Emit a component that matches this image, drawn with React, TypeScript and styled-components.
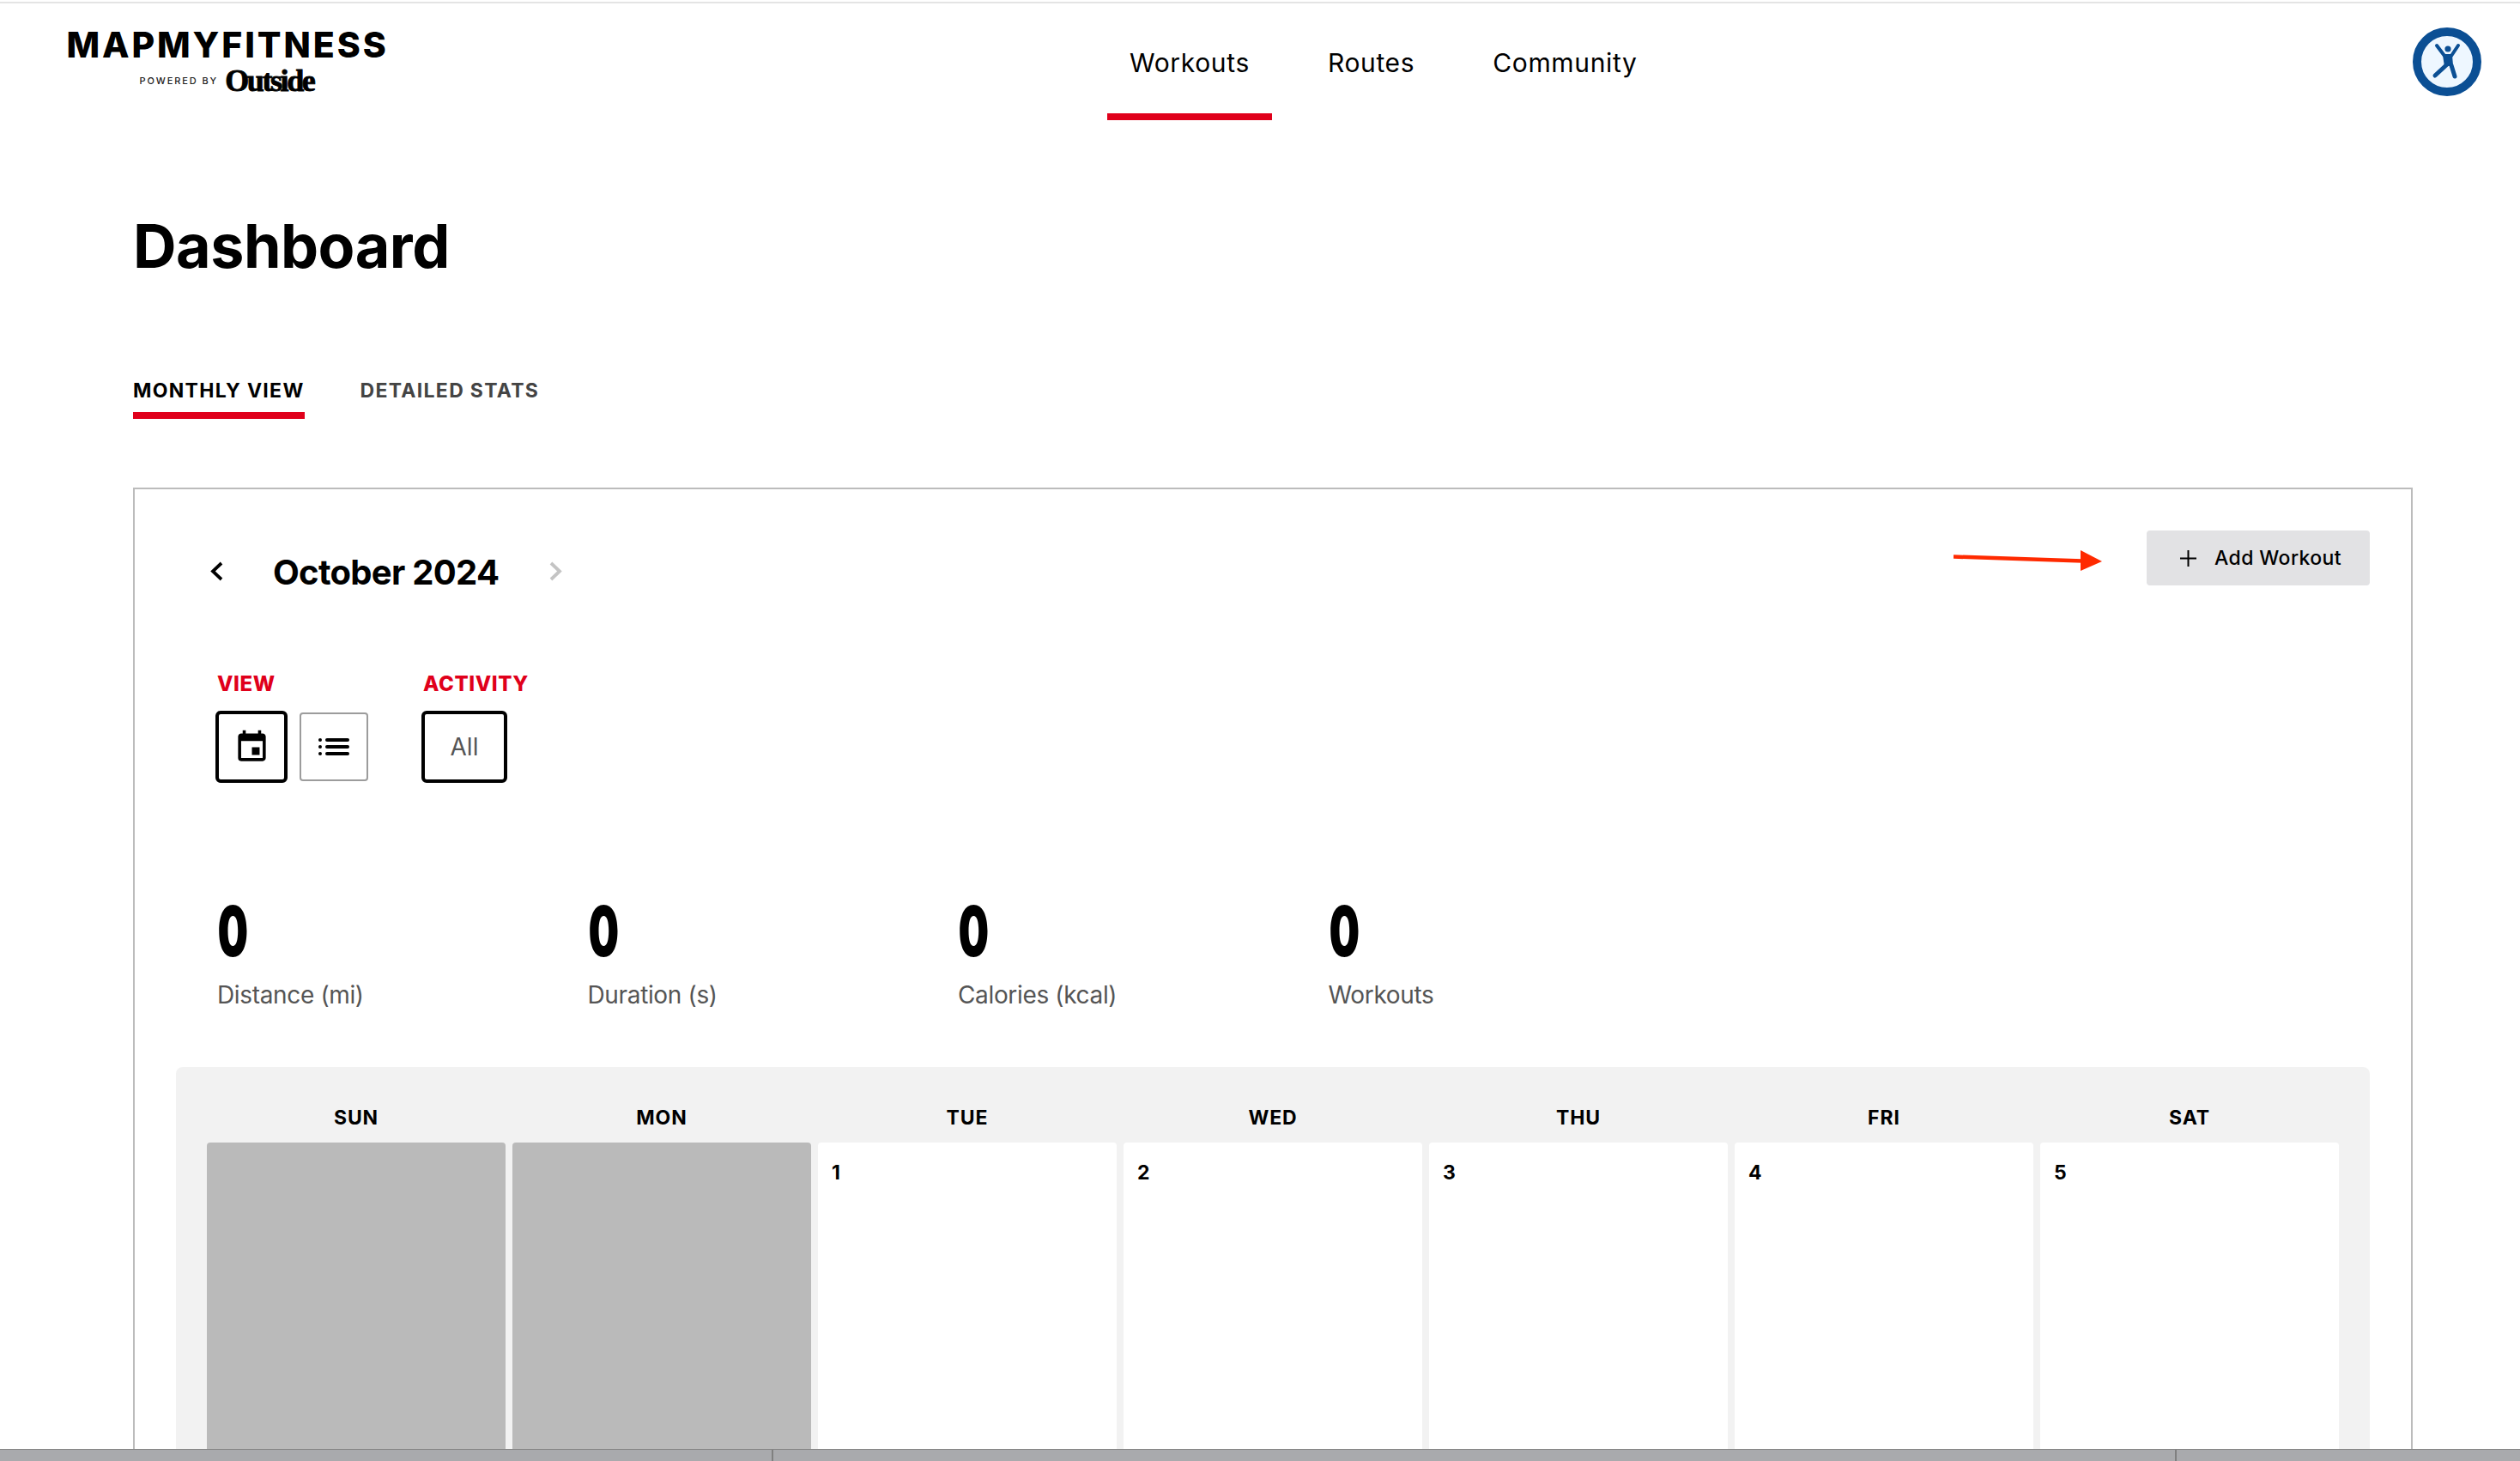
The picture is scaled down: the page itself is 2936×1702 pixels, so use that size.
import styled, { createGlobalStyle } from "styled-components";
import { MdEvent } from "react-icons/md";

const GlobalStyle = createGlobalStyle`
  html, body {
    margin: 0;
    padding: 0;
    background: #fff;
    font-family: Inter, "Liberation Sans", sans-serif;
    color: #000;
  }
`;

const Page = styled.div`
  display: flex;
  flex-direction: column;
  height: 1702px;
  overflow: hidden;
  padding-top: 2px;
  box-sizing: border-box;
`;

const Header = styled.header`
  display: flex;
  align-items: flex-start;
  flex: none;
  height: 138px;
  box-sizing: border-box;
  border-top: 2px solid #e4e4e4;
  padding-left: 80px;
  padding-right: 45px;
`;

const Logo = styled.div`
  display: flex;
  flex-direction: column;
  align-items: center;
  width: 368px;
  padding-top: 28px;
`;

const LogoWord = styled.div`
  margin-left: 2px;
  font-size: 41px;
  line-height: 41px;
  font-weight: 800;
  letter-spacing: 2.9px;
  white-space: nowrap;
`;

const PoweredRow = styled.div`
  display: flex;
  align-items: center;
  gap: 8px;
  margin-top: 5px;
`;

const PoweredBy = styled.span`
  font-size: 11px;
  line-height: 14px;
  letter-spacing: 1.9px;
  font-weight: 500;
  color: #222;
`;

const Outside = styled.span`
  font-family: "Liberation Serif", serif;
  font-weight: 700;
  font-size: 36px;
  line-height: 32px;
  letter-spacing: -2.4px;
  -webkit-text-stroke: 0.9px #000;
`;

const Nav = styled.nav`
  display: flex;
  gap: 39px;
  margin-left: 842px;
`;

const NavItem = styled.a<{ $active?: boolean }>`
  display: block;
  box-sizing: border-box;
  height: 136px;
  padding: 54px 26px 0;
  font-size: 30px;
  line-height: 30px;
  letter-spacing: 0.65px;
  border-bottom: 8px solid ${(p) => (p.$active ? "#e0001b" : "transparent")};
`;

const Avatar = styled.div`
  margin-left: auto;
  margin-top: 28px;
  width: 80px;
  height: 80px;
`;

const Main = styled.main`
  flex: 1;
  min-height: 0;
  overflow: hidden;
  padding: 0 125px 0 155px;
`;

const Title = styled.h1`
  margin: 112px 0 0;
  font-size: 70px;
  line-height: 70px;
  font-weight: 700;
  letter-spacing: -0.5px;
`;

const Tabs = styled.div`
  display: flex;
  gap: 65px;
  margin-top: 121px;
`;

const Tab = styled.div<{ $active?: boolean }>`
  box-sizing: border-box;
  height: 45px;
  padding-top: 1px;
  font-size: 23px;
  line-height: 23px;
  font-weight: 700;
  letter-spacing: 1.3px;
  color: ${(p) => (p.$active ? "#000" : "#444")};
  border-bottom: 8px solid ${(p) => (p.$active ? "#e0001b" : "transparent")};
`;

const Card = styled.section`
  margin-top: 80px;
  border: 2px solid #bcbcbc;
  padding: 48px 48px 0;
  height: 1300px;
`;

const CardTop = styled.div`
  display: flex;
  justify-content: space-between;
  align-items: flex-start;
`;

const MonthNav = styled.div`
  display: flex;
  align-items: center;
  height: 40px;
  margin: 29px 0 0 40px;
`;

const MonthLabel = styled.div`
  margin: 0 59px 0 58px;
  font-size: 40px;
  line-height: 40px;
  font-weight: 700;
  letter-spacing: -0.7px;
  white-space: nowrap;
`;

const Chevron = styled.svg`
  display: block;
  margin-top: -3px;
`;

const Actions = styled.div`
  display: flex;
  align-items: flex-start;
  gap: 52px;
`;

const Arrow = styled.svg`
  display: block;
  margin-top: 23px;
`;

const AddButton = styled.button`
  display: flex;
  align-items: center;
  gap: 21px;
  box-sizing: border-box;
  width: 260px;
  height: 64px;
  padding: 0 0 0 39px;
  border: 0;
  border-radius: 4px;
  background: #e2e2e4;
  color: #000;
  font-family: inherit;
  font-size: 23px;
  font-weight: 500;
  letter-spacing: 0.4px;
  white-space: nowrap;
`;

const Filters = styled.div`
  display: flex;
  gap: 62px;
  margin: 98px 0 0 46px;
`;

const FilterLabel = styled.div`
  margin: 0 0 19px 2px;
  font-size: 24px;
  line-height: 24px;
  font-weight: 800;
  letter-spacing: 0.6px;
  color: #e0001b;
`;

const FilterRow = styled.div`
  display: flex;
  align-items: center;
  gap: 14px;
`;

const FilterButton = styled.div<{ $selected?: boolean; $wide?: boolean }>`
  display: flex;
  align-items: center;
  justify-content: center;
  box-sizing: border-box;
  width: ${(p) => (p.$wide ? "100px" : p.$selected ? "84px" : "80px")};
  height: ${(p) => (p.$selected ? "84px" : "80px")};
  border: ${(p) => (p.$selected ? "4px solid #000" : "2px solid #9c9c9c")};
  border-radius: ${(p) => (p.$selected ? "6px" : "4px")};
  font-size: 28px;
  color: #555;
`;

const Stats = styled.div`
  display: grid;
  grid-template-columns: repeat(4, 431.5px);
  margin: 133px 0 0 48px;
`;

const StatValue = styled.div`
  padding-left: 1px;
  font-size: 81px;
  line-height: 81px;
  font-weight: 900;
  transform: scaleX(0.62);
  transform-origin: left center;
`;

const StatLabel = styled.div`
  margin-top: 19px;
  font-size: 28px;
  line-height: 28px;
  letter-spacing: -0.35px;
  color: #555;
`;

const Panel = styled.div`
  margin-top: 70px;
  padding: 48px 36px 0;
  border-radius: 8px 8px 0 0;
  background: #f2f2f2;
  height: 700px;
`;

const CalendarGrid = styled.div`
  display: grid;
  grid-template-columns: repeat(7, 348px);
  column-gap: 8px;
`;

const Weekday = styled.div`
  margin-bottom: 17px;
  text-align: center;
  font-size: 23px;
  line-height: 23px;
  font-weight: 700;
  letter-spacing: 0.9px;
`;

const Day = styled.div<{ $blank?: boolean }>`
  box-sizing: border-box;
  height: 420px;
  padding: 24px 16px;
  border-radius: 4px;
  background: ${(p) => (p.$blank ? "#bababa" : "#fff")};
  font-size: 23px;
  line-height: 23px;
  font-weight: 700;
`;

const DockBar = styled.div`
  display: flex;
  flex: none;
  height: 14px;
  box-sizing: border-box;
  border-top: 1px solid #868686;
  background: #a9aaad;
`;

const DockSegment = styled.div<{ $width?: number }>`
  flex: ${(p) => (p.$width ? `0 0 ${p.$width}px` : "1")};
  border-right: ${(p) => (p.$width ? "2px solid #808080" : "0")};
  box-sizing: border-box;
`;

const ChevronLeft = () => (
  <Chevron width="15" height="23" viewBox="0 0 15 23" fill="none" stroke="#000" strokeWidth="3.8">
    <path d="M13 2 3 11.5 13 21" />
  </Chevron>
);

const ChevronRight = () => (
  <Chevron width="15" height="23" viewBox="0 0 15 23" fill="none" stroke="#c4c4c4" strokeWidth="3.8">
    <path d="M2 2l10 9.5L2 21" />
  </Chevron>
);

const ListIcon = () => (
  <svg width="36" height="20" viewBox="0 0 36 20" fill="#000">
    <circle cx="2" cy="2" r="2" />
    <circle cx="2" cy="10" r="2" />
    <circle cx="2" cy="18" r="2" />
    <rect x="8" y="0" width="28" height="4" rx="2" />
    <rect x="8" y="8" width="28" height="4" rx="2" />
    <rect x="8" y="16" width="28" height="4" rx="2" />
  </svg>
);

const PlusIcon = () => (
  <svg width="19" height="19" viewBox="0 0 19 19" stroke="#000" strokeWidth="2">
    <path d="M9.5 0v19M0 9.5h19" />
  </svg>
);

const AvatarIcon = () => (
  <svg width="80" height="80" viewBox="0 0 80 80">
    <circle cx="40" cy="40" r="35" fill="#eef7ff" stroke="#0b4f94" strokeWidth="10" />
    <circle cx="41" cy="25" r="3.6" fill="#0b4f94" />
    <path d="M28 21 37 33h8l8-12" fill="none" stroke="#0b4f94" strokeWidth="4" strokeLinecap="round" strokeLinejoin="round" />
    <path d="M35 32h11l1 12-10 2z" fill="#0b4f94" />
    <path d="M39 44 26 56M45 44l4 13" fill="none" stroke="#0b4f94" strokeWidth="5" strokeLinecap="round" />
  </svg>
);

const weekdays = ["SUN", "MON", "TUE", "WED", "THU", "FRI", "SAT"];
const days = ["", "", "1", "2", "3", "4", "5"];
const stats = ["Distance (mi)", "Duration (s)", "Calories (kcal)", "Workouts"];

export default function App() {
  return (
    <Page>
      <GlobalStyle />
      <Header>
        <Logo>
          <LogoWord>MAPMYFITNESS</LogoWord>
          <PoweredRow>
            <PoweredBy>POWERED BY</PoweredBy>
            <Outside>Outside</Outside>
          </PoweredRow>
        </Logo>
        <Nav>
          <NavItem $active>Workouts</NavItem>
          <NavItem>Routes</NavItem>
          <NavItem>Community</NavItem>
        </Nav>
        <Avatar>
          <AvatarIcon />
        </Avatar>
      </Header>
      <Main>
        <Title>Dashboard</Title>
        <Tabs>
          <Tab $active>MONTHLY VIEW</Tab>
          <Tab>DETAILED STATS</Tab>
        </Tabs>
        <Card>
          <CardTop>
            <MonthNav>
              <ChevronLeft />
              <MonthLabel>October 2024</MonthLabel>
              <ChevronRight />
            </MonthNav>
            <Actions>
              <Arrow width="173" height="24" viewBox="0 0 173 24">
                <path d="M0 7.5 150 12.5" stroke="#ff2a00" strokeWidth="4.5" />
                <path d="M148 0 173 13 148 24z" fill="#ff2a00" />
              </Arrow>
              <AddButton>
                <PlusIcon />
                Add Workout
              </AddButton>
            </Actions>
          </CardTop>
          <Filters>
            <div>
              <FilterLabel>VIEW</FilterLabel>
              <FilterRow>
                <FilterButton $selected>
                  <MdEvent size={43} color="#000" />
                </FilterButton>
                <FilterButton>
                  <ListIcon />
                </FilterButton>
              </FilterRow>
            </div>
            <div>
              <FilterLabel>ACTIVITY</FilterLabel>
              <FilterRow>
                <FilterButton $selected $wide>
                  All
                </FilterButton>
              </FilterRow>
            </div>
          </Filters>
          <Stats>
            {stats.map((label) => (
              <div key={label}>
                <StatValue>0</StatValue>
                <StatLabel>{label}</StatLabel>
              </div>
            ))}
          </Stats>
          <Panel>
            <CalendarGrid>
              {weekdays.map((d) => (
                <Weekday key={d}>{d}</Weekday>
              ))}
              {days.map((d, i) => (
                <Day key={i} $blank={!d}>
                  {d}
                </Day>
              ))}
            </CalendarGrid>
          </Panel>
        </Card>
      </Main>
      <DockBar>
        <DockSegment $width={901} />
        <DockSegment $width={1635} />
        <DockSegment />
      </DockBar>
    </Page>
  );
}
